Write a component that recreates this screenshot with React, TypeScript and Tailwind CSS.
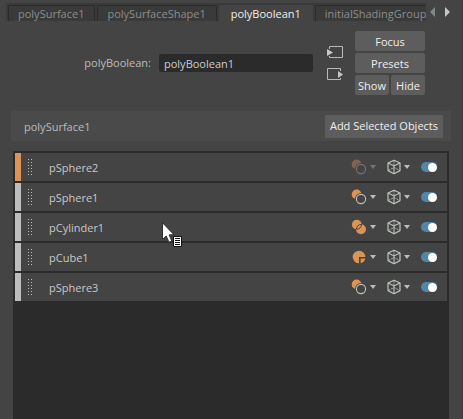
import React, { useState } from "react";

type Op = "difference" | "union" | "cut";

interface BooleanInput {
  name: string;
  op: Op;
  base?: boolean;
}

const tabs = ["polySurface1", "polySurfaceShape1", "polyBoolean1", "initialShadingGroup"];

const inputs: BooleanInput[] = [
  { name: "pSphere2", op: "difference", base: true },
  { name: "pSphere1", op: "difference" },
  { name: "pCylinder1", op: "union" },
  { name: "pCube1", op: "cut" },
  { name: "pSphere3", op: "difference" },
];

function OpIcon({ op }: { op: Op }) {
  if (op === "cut") {
    return (
      <svg width="16" height="16" viewBox="0 0 16 16" aria-hidden="true">
        <path d="M8 8h6.3A6.3 6.3 0 1 0 8 14.3z" fill="#dc9454" />
        <path d="M9.6 9.6h4.7A6 6 0 0 1 9.6 14.3z" fill="#dc9454" />
      </svg>
    );
  }
  if (op === "union") {
    return (
      <svg width="16" height="16" viewBox="0 0 16 16" aria-hidden="true">
        <circle cx="5.8" cy="5.6" r="4.9" fill="#dc9454" />
        <circle cx="10" cy="10.2" r="5" fill="#dc9454" />
        <path d="M5.4 10.3A4.9 4.9 0 0 0 10.5 5.4A4.9 4.9 0 0 0 5.4 10.3z" fill="#dc9454" stroke="#444444" strokeWidth="1" />
      </svg>
    );
  }
  return (
    <svg width="16" height="16" viewBox="0 0 16 16" aria-hidden="true">
      <circle cx="5.6" cy="5.4" r="4.9" fill="#dc9454" />
      <circle cx="10" cy="10" r="6" fill="#444444" />
      <circle cx="10" cy="10" r="4.6" fill="none" stroke="#bcc4bc" strokeWidth="1.1" />
    </svg>
  );
}

function CubeIcon() {
  return (
    <svg width="14" height="16" viewBox="0 0 14 16" fill="none" stroke="#bcc4bc" aria-hidden="true">
      <path d="M7 1.2L13 4v7.6L7 14.8L1 11.6V4z" strokeWidth="1.2" strokeLinejoin="round" />
      <path d="M1 4L7 7L13 4M7 7v7.8" strokeWidth="1.1" />
      <path d="M7 1.5V7M1.5 11.3L7 8.5L12.5 11.3" strokeWidth="0.9" strokeDasharray="2 1" />
    </svg>
  );
}

function Caret() {
  return (
    <svg width="6" height="4" viewBox="0 0 6 4" aria-hidden="true">
      <path d="M0 0h6L3 4z" fill="#bcbcbc" />
    </svg>
  );
}

function Grip() {
  return (
    <svg width="4" height="16" viewBox="0 0 4 16" fill="#bcbcbc" shapeRendering="crispEdges" aria-hidden="true">
      {[0, 3, 6, 9, 12, 15].map((y) => (
        <React.Fragment key={y}>
          <rect x="0" y={y} width="1" height="1" />
          <rect x="3" y={y} width="1" height="1" />
        </React.Fragment>
      ))}
    </svg>
  );
}

function ConnectionIcon({ output }: { output?: boolean }) {
  return (
    <svg width="18" height="14" viewBox="0 0 18 14" aria-hidden="true">
      {output ? (
        <>
          <path d="M14.5 4V1.5h-13v11h13V11" fill="none" stroke="#b4bab4" />
          <path d="M12 4l5 3.5L12 11z" fill="#c4c8c4" />
        </>
      ) : (
        <>
          <path d="M3.5 4V1.5h13v11h-13V11" fill="none" stroke="#b4bab4" />
          <path d="M1 4l6 3.5L1 11z" fill="#c4c8c4" />
        </>
      )}
    </svg>
  );
}

function PanelButton({ children, className = "" }: { children: React.ReactNode; className?: string }) {
  return (
    <button type="button" className={`h-5 rounded-xs bg-[#5d5d5d] pt-px text-center leading-5 text-[#eeeeee] ${className}`}>
      {children}
    </button>
  );
}

function InputRow({ item }: { item: BooleanInput }) {
  const [enabled, setEnabled] = useState(true);
  return (
    <li className="flex h-7 items-center bg-[#444444]">
      <span className={`h-full w-1.5 ${item.base ? "bg-[#dc9454]" : "bg-[#bdbdbd]"}`} />
      <span className="ml-[7px]">
        <Grip />
      </span>
      <span className="ml-[17px] flex-1 pt-0.5 text-[#c8c8c8]">{item.name}</span>
      <button
        type="button"
        aria-label={`${item.name} operation`}
        disabled={item.base}
        className="flex items-center gap-[3px] disabled:opacity-40"
      >
        <OpIcon op={item.op} />
        <Caret />
      </button>
      <button type="button" aria-label={`${item.name} display`} className="ml-[11px] flex items-center gap-[3px]">
        <CubeIcon />
        <Caret />
      </button>
      <input
        type="checkbox"
        role="switch"
        aria-label={`${item.name} enabled`}
        checked={enabled}
        onChange={(e) => setEnabled(e.target.checked)}
        className="mr-2.5 ml-[11px] flex h-2.5 w-4 appearance-none items-center rounded-full bg-[#5285a6] before:size-[9px] before:rounded-full before:bg-white checked:justify-end"
      />
    </li>
  );
}

export default function App() {
  const [name, setName] = useState("polyBoolean1");
  return (
    <main className="relative flex min-h-screen flex-col border-r border-[#3a3a3a] bg-[#444444] font-['Open_Sans','Noto_Sans',sans-serif] text-[11px] leading-4 text-[#bbbbbb]">
      <header className="mt-[3px] ml-1.5 flex h-[18px]">
        <div role="tablist" className="flex min-w-0 flex-1 gap-0.5 overflow-hidden bg-[#3a3a3a] pt-0.5 pl-0.5">
          {tabs.map((tab) => {
            const active = tab === "polyBoolean1";
            return (
              <button
                key={tab}
                type="button"
                role="tab"
                aria-selected={active}
                className={`h-4 shrink-0 rounded-t-xs border border-b-0 leading-4 whitespace-nowrap ${
                  active ? "border-[#444444] bg-[#444444] px-[11px] text-[#eeeeee]" : "border-[#2b2b2b] bg-[#3a3a3a] pr-2.5 pl-[9px] text-[#8c8c8c]"
                }`}
              >
                {tab}
              </button>
            );
          })}
        </div>
        <div className="flex w-9 items-center gap-[9px] pl-1">
          <button type="button" aria-label="Previous tabs">
            <svg width="6" height="10" viewBox="0 0 6 10" aria-hidden="true">
              <path d="M5 0v10L0 5z" fill="#7f8984" />
            </svg>
          </button>
          <button type="button" aria-label="Next tabs">
            <svg width="6" height="10" viewBox="0 0 6 10" aria-hidden="true">
              <path d="M0 0v10l5-5z" fill="#c4c8c4" />
            </svg>
          </button>
        </div>
      </header>

      <section className="mt-2.5 flex items-center pr-[37px]">
        <label htmlFor="node-name" className="w-[151px] text-right">
          polyBoolean:
        </label>
        <input
          id="node-name"
          value={name}
          onChange={(e) => setName(e.target.value)}
          className="ml-2 h-[18px] min-w-0 flex-1 rounded-xs bg-[#2b2b2b] px-[5px] text-[#cccccc]"
        />
        <div className="ml-[13px] flex flex-col gap-2">
          <button type="button" aria-label="Go to input connection">
            <ConnectionIcon />
          </button>
          <button type="button" aria-label="Go to output connection">
            <ConnectionIcon output />
          </button>
        </div>
        <div className="ml-[11px] grid w-[70px] grid-cols-2 gap-0.5">
          <PanelButton className="col-span-2">Focus</PanelButton>
          <PanelButton className="col-span-2">Presets</PanelButton>
          <PanelButton>Show</PanelButton>
          <PanelButton>Hide</PanelButton>
        </div>
      </section>

      <section className="mt-4 flex flex-1 flex-col pr-[11px] pl-[11px]">
        <div className="flex h-[30px] items-center justify-between bg-[#4a4a4a] pr-2 pl-[13px]">
          <h2 className="pt-0.5">polySurface1</h2>
          <button type="button" className="h-[23px] bg-[#5d5d5d] px-[5px] text-[#eeeeee]">
            Add Selected Objects
          </button>
        </div>
        <ul className="mx-0.5 mt-2.5 flex flex-1 flex-col gap-0.5 bg-[#2b2b2b] p-0.5">
          {inputs.map((item) => (
            <InputRow key={item.name} item={item} />
          ))}
        </ul>
      </section>

      <svg
        className="pointer-events-none absolute top-[222px] left-[161px]"
        width="22"
        height="26"
        viewBox="0 0 22 26"
        aria-hidden="true"
      >
        <path d="M1.5 0.8V17.4L5.2 14L8 20.2L10.8 19L8.2 12.8H13z" fill="#ffffff" stroke="#222222" strokeWidth="0.9" />
        <path d="M12.5 14.5h8v10h-8z" fill="#ffffff" stroke="#111111" />
        <path d="M14 16.5h5M14 18.5h5M14 20.5h5M14 22.5h5" stroke="#111111" shapeRendering="crispEdges" />
      </svg>
    </main>
  );
}
